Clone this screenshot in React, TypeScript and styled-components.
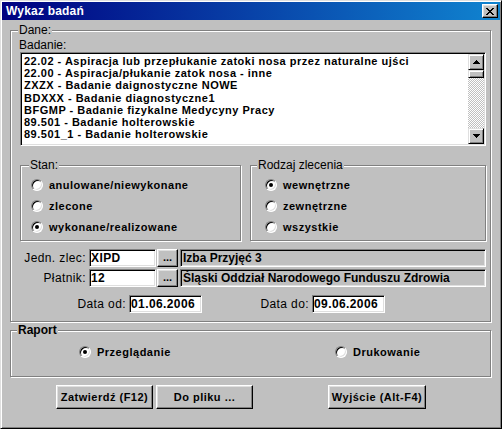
import React from 'react';
import styled, { createGlobalStyle } from 'styled-components';

const GlobalStyle = createGlobalStyle`
  html, body {
    margin: 0;
    padding: 0;
    background: #c0c0c0;
  }
  body {
    font-family: "Liberation Sans", Arial, sans-serif;
  }
  * {
    box-sizing: border-box;
  }
`;

const Window = styled.div`
  width: 502px;
  height: 429px;
  overflow: hidden;
  background: #c0c0c0;
  border: 1px solid;
  border-color: #dfdfdf #000 #000 #dfdfdf;
  box-shadow: inset 1px 1px 0 #fff, inset -1px -1px 0 #808080;
  padding: 1px;
  display: flex;
  flex-direction: column;
  color: #000;
  font-family: "Liberation Sans", Arial, sans-serif;
`;

const TitleBar = styled.div`
  height: 18px;
  flex: none;
  display: flex;
  align-items: center;
  justify-content: space-between;
  padding: 0 2px 0 4px;
  background: linear-gradient(90deg, #000080 0%, #1084d0 100%);
`;

const TitleText = styled.span`
  color: #fff;
  font-weight: bold;
  font-size: 12px;
  letter-spacing: 0.2px;
`;

const CloseButton = styled.button`
  width: 16px;
  height: 14px;
  padding: 0;
  display: flex;
  align-items: center;
  justify-content: center;
  background: #c0c0c0;
  border: 1px solid;
  border-color: #fff #000 #000 #fff;
  box-shadow: inset -1px -1px 0 #808080, inset 1px 1px 0 #dfdfdf;
`;

const Body = styled.div`
  display: flex;
  flex-direction: column;
  padding: 3px 9px 0 8px;
`;

const GroupBox = styled.fieldset<{ $pad: string }>`
  margin: 0;
  min-width: 0;
  padding: ${p => p.$pad};
  border: 1px solid #808080;
  box-shadow: inset 1px 1px 0 #fff, 1px 1px 0 #fff;
`;

const Legend = styled.legend<{ $lx: number; $bold?: boolean }>`
  margin-left: ${p => p.$lx}px;
  padding: 0 1px;
  background: #c0c0c0;
  font-size: 12px;
  line-height: 14px;
  font-weight: ${p => (p.$bold ? 'bold' : 'normal')};
`;

const Caption = styled.div`
  font-size: 12px;
  line-height: 14px;
  margin-left: -1px;
`;

const ListBox = styled.div`
  height: 94px;
  display: flex;
  background: #fff;
  border: 1px solid;
  border-color: #808080 #fff #fff #808080;
  box-shadow: inset 1px 1px 0 #000, inset -1px -1px 0 #dfdfdf;
  padding: 1px;
`;

const ListItems = styled.div`
  flex: 1;
  overflow: hidden;
  padding: 1px 0 0 2px;
`;

const ListItem = styled.div`
  font-size: 11px;
  font-weight: bold;
  letter-spacing: 0.5px;
  line-height: 12.2px;
  white-space: nowrap;
`;

const ScrollBar = styled.div`
  width: 16px;
  display: flex;
  flex-direction: column;
  background-color: #fff;
  background-image: conic-gradient(#c0c0c0 25%, #fff 0 50%, #c0c0c0 0 75%, #fff 0);
  background-size: 2px 2px;
`;

const ScrollButton = styled.div<{ $h: number }>`
  height: ${p => p.$h}px;
  flex: none;
  display: flex;
  align-items: center;
  justify-content: center;
  background: #c0c0c0;
  border: 1px solid;
  border-color: #dfdfdf #000 #000 #dfdfdf;
  box-shadow: inset 1px 1px 0 #fff, inset -1px -1px 0 #808080;
`;

const ScrollTrack = styled.div`
  flex: 1;
`;

const GroupsRow = styled.div`
  display: flex;
  gap: 9px;
  margin-top: 12px;
`;

const RadioRow = styled.label`
  display: flex;
  align-items: center;
  gap: 6px;
  height: 21px;
  font-size: 11px;
  font-weight: bold;
  letter-spacing: 0.5px;
  white-space: nowrap;
`;

const RadioCircle = styled.span<{ $checked?: boolean }>`
  position: relative;
  flex: none;
  width: 12px;
  height: 12px;
  border-radius: 50%;
  background: #fff;
  border: 1px solid;
  border-color: #808080 #fff #fff #808080;
  box-shadow: inset 1px 1px 0 #000, inset -1px -1px 0 #dfdfdf;

  &::after {
    content: '';
    display: ${p => (p.$checked ? 'block' : 'none')};
    position: absolute;
    left: 3px;
    top: 3px;
    width: 4px;
    height: 4px;
    border-radius: 50%;
    background: #000;
  }
`;

const FieldRow = styled.div<{ $mt: number }>`
  display: flex;
  align-items: center;
  height: 18px;
  margin-top: ${p => p.$mt}px;
`;

const FieldLabel = styled.span<{ $w: number }>`
  flex: none;
  width: ${p => p.$w}px;
  padding-right: 3px;
  text-align: right;
  font-size: 12px;
  letter-spacing: 0.4px;
  white-space: nowrap;
`;

const TextInput = styled.input<{ $w: number }>`
  width: ${p => p.$w}px;
  height: 18px;
  flex: none;
  margin: 0;
  padding: 0 0 0 1px;
  background: #fff;
  border: 1px solid;
  border-color: #808080 #fff #fff #808080;
  box-shadow: inset 1px 1px 0 #000, inset -1px -1px 0 #dfdfdf;
  font-family: "Liberation Sans", Arial, sans-serif;
  font-size: 12px;
  font-weight: bold;
  letter-spacing: 0.4px;
  color: #000;
  outline: none;
`;

const DotsButton = styled.button`
  width: 21px;
  height: 18px;
  flex: none;
  margin-left: 1px;
  padding: 0 0 3px;
  background: #c0c0c0;
  border: 1px solid;
  border-color: #fff #000 #000 #fff;
  box-shadow: inset -1px -1px 0 #808080, inset 1px 1px 0 #dfdfdf;
  font-family: "Liberation Sans", Arial, sans-serif;
  font-size: 11px;
  font-weight: bold;
  color: #000;
`;

const Display = styled.div`
  flex: 1;
  height: 18px;
  margin-left: 2px;
  padding-left: 2px;
  display: flex;
  align-items: center;
  background: #c0c0c0;
  border: 1px solid;
  border-color: #808080 #fff #fff #808080;
  box-shadow: inset 1px 1px 0 #000, inset -1px -1px 0 #dfdfdf;
  font-size: 12px;
  font-weight: bold;
  white-space: nowrap;
  overflow: hidden;
`;

const ReportRow = styled.div`
  display: grid;
  grid-template-columns: 256px auto;
`;

const ButtonRow = styled.div`
  display: flex;
  gap: 3px;
  margin-top: 8px;
  padding-left: 46px;
`;

const Button = styled.button<{ $w: number; $push?: number }>`
  width: ${p => p.$w}px;
  height: 24px;
  margin-left: ${p => p.$push ?? 0}px;
  padding: 0;
  background: #c0c0c0;
  border: 1px solid;
  border-color: #fff #000 #000 #fff;
  box-shadow: inset -1px -1px 0 #808080, inset 1px 1px 0 #dfdfdf;
  font-family: "Liberation Sans", Arial, sans-serif;
  font-size: 11px;
  font-weight: bold;
  letter-spacing: 0.5px;
  color: #000;
`;

const CloseGlyph = () => {
  const rows: [number, number][][] = [
    [[0, 2], [6, 2]],
    [[1, 2], [5, 2]],
    [[2, 4]],
    [[3, 2]],
    [[2, 4]],
    [[1, 2], [5, 2]],
    [[0, 2], [6, 2]],
  ];
  return (
    <svg width="8" height="7" viewBox="0 0 8 7" shapeRendering="crispEdges">
      {rows.map((segs, y) =>
        segs.map(([x, w]) => <rect key={`${y}-${x}`} x={x} y={y} width={w} height={1} fill="#000" />)
      )}
    </svg>
  );
};

const Arrow = ({ down }: { down?: boolean }) => (
  <svg width="7" height="4" viewBox="0 0 7 4" shapeRendering="crispEdges">
    <path
      d={
        down
          ? 'M0 0h7v1h-7z M1 1h5v1h-5z M2 2h3v1h-3z M3 3h1v1h-1z'
          : 'M3 0h1v1h-1z M2 1h3v1h-3z M1 2h5v1h-5z M0 3h7v1h-7z'
      }
      fill="#000"
    />
  </svg>
);

const Radio = ({ label, checked }: { label: string; checked?: boolean }) => (
  <RadioRow>
    <RadioCircle $checked={checked} />
    {label}
  </RadioRow>
);

const badania = [
  '22.02 - Aspiracja lub przepłukanie zatoki nosa przez naturalne ujści',
  '22.00 - Aspiracja/płukanie zatok nosa - inne',
  'ZXZX - Badanie daignostyczne NOWE',
  'BDXXX - Badanie diagnostyczne1',
  'BFGMP - Badanie fizykalne Medycyny Pracy',
  '89.501 - Badanie holterowskie',
  '89.501_1 - Badanie holterowskie',
];

export default function App() {
  return (
    <>
      <GlobalStyle />
      <Window>
        <TitleBar>
          <TitleText>Wykaz badań</TitleText>
          <CloseButton>
            <CloseGlyph />
          </CloseButton>
        </TitleBar>
        <Body>
          <GroupBox $pad="1px 4px 8px 9px">
            <Legend $lx={-2}>Dane:</Legend>
            <Caption>Badanie:</Caption>
            <ListBox>
              <ListItems>
                {badania.map(b => (
                  <ListItem key={b}>{b}</ListItem>
                ))}
              </ListItems>
              <ScrollBar>
                <ScrollButton $h={16}>
                  <Arrow />
                </ScrollButton>
                <ScrollButton $h={8} />
                <ScrollTrack />
                <ScrollButton $h={16}>
                  <Arrow down />
                </ScrollButton>
              </ScrollBar>
            </ListBox>

            <GroupsRow>
              <GroupBox $pad="2px 0 3px 10px" style={{ width: 221 }}>
                <Legend $lx={-2}>Stan:</Legend>
                <Radio label="anulowane/niewykonane" />
                <Radio label="zlecone" />
                <Radio label="wykonane/realizowane" checked />
              </GroupBox>
              <GroupBox $pad="2px 0 3px 14px" style={{ flex: 1 }}>
                <Legend $lx={-8}>Rodzaj zlecenia</Legend>
                <Radio label="wewnętrzne" checked />
                <Radio label="zewnętrzne" />
                <Radio label="wszystkie" />
              </GroupBox>
            </GroupsRow>

            <FieldRow $mt={8}>
              <FieldLabel $w={69}>Jedn. zlec:</FieldLabel>
              <TextInput $w={67} defaultValue="XIPD" />
              <DotsButton>...</DotsButton>
              <Display>Izba Przyjęć 3</Display>
            </FieldRow>
            <FieldRow $mt={2}>
              <FieldLabel $w={69}>Płatnik:</FieldLabel>
              <TextInput $w={67} defaultValue="12" />
              <DotsButton>...</DotsButton>
              <Display>Śląski Oddział Narodowego Funduszu Zdrowia</Display>
            </FieldRow>
            <FieldRow $mt={8}>
              <FieldLabel $w={109}>Data od:</FieldLabel>
              <TextInput $w={73} defaultValue="01.06.2006" />
              <FieldLabel $w={110}>Data do:</FieldLabel>
              <TextInput $w={73} defaultValue="09.06.2006" />
            </FieldRow>
          </GroupBox>

          <GroupBox $pad="4px 0 14px 68px" style={{ marginTop: 1 }}>
            <Legend $lx={-62} $bold>
              Raport
            </Legend>
            <ReportRow>
              <Radio label="Przeglądanie" checked />
              <Radio label="Drukowanie" />
            </ReportRow>
          </GroupBox>

          <ButtonRow>
            <Button $w={97}>Zatwierdź (F12)</Button>
            <Button $w={97}>Do pliku ...</Button>
            <Button $w={98} $push={72}>
              Wyjście (Alt-F4)
            </Button>
          </ButtonRow>
        </Body>
      </Window>
    </>
  );
}
